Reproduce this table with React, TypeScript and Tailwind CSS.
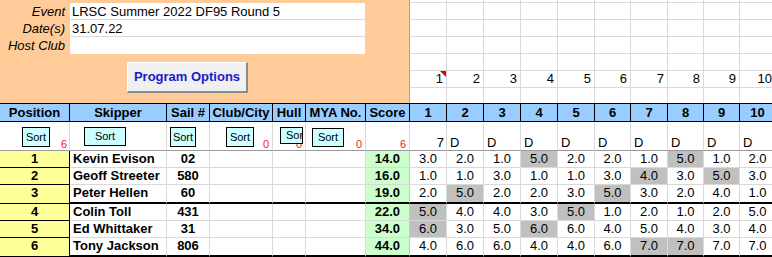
import React from "react";

const GRID =
  "grid grid-cols-[70px_97px_43px_63px_33px_60px_44px_37px_37px_37px_37px_37px_36px_37px_36px_36px_36px]";
const TOPGRID = "grid grid-cols-[37px_37px_37px_37px_37px_36px_37px_36px_36px_36px]";

type Row = {
  pos: number;
  name: string;
  sail: string;
  score: string;
  races: string[];
  gray: number[];
  thick?: boolean;
};

const rows: Row[] = [
  { pos: 1, name: "Kevin Evison", sail: "02", score: "14.0", races: ["3.0", "2.0", "1.0", "5.0", "2.0", "2.0", "1.0", "5.0", "1.0", "2.0"], gray: [3, 7] },
  { pos: 2, name: "Geoff Streeter", sail: "580", score: "16.0", races: ["1.0", "1.0", "3.0", "1.0", "1.0", "3.0", "4.0", "3.0", "5.0", "3.0"], gray: [6, 8] },
  { pos: 3, name: "Peter Hellen", sail: "60", score: "19.0", races: ["2.0", "5.0", "2.0", "2.0", "3.0", "5.0", "3.0", "2.0", "4.0", "1.0"], gray: [1, 5], thick: true },
  { pos: 4, name: "Colin Toll", sail: "431", score: "22.0", races: ["5.0", "4.0", "4.0", "3.0", "5.0", "1.0", "2.0", "1.0", "2.0", "5.0"], gray: [0, 4] },
  { pos: 5, name: "Ed Whittaker", sail: "31", score: "34.0", races: ["6.0", "3.0", "5.0", "6.0", "6.0", "4.0", "5.0", "4.0", "3.0", "4.0"], gray: [0, 3] },
  { pos: 6, name: "Tony Jackson", sail: "806", score: "44.0", races: ["4.0", "6.0", "6.0", "4.0", "4.0", "6.0", "7.0", "7.0", "7.0", "7.0"], gray: [6, 7], thick: true },
];

const headers = ["Position", "Skipper", "Sail #", "Club/City", "Hull", "MYA No.", "Score", "1", "2", "3", "4", "5", "6", "7", "8", "9", "10"];
const raceNums = ["1", "2", "3", "4", "5", "6", "7", "8", "9", "10"];

function SortBtn({ className, label = "Sort", start = false }: { className: string; label?: string; start?: boolean }) {
  return (
    <div
      className={`absolute z-10 flex items-center overflow-hidden whitespace-nowrap border border-black bg-[#CCFFFF] text-[11px] leading-none text-black ${
        start ? "justify-start pl-[5px]" : "justify-center"
      } ${className}`}
    >
      {label}
    </div>
  );
}

function RedNum({ v, right = "right-[3px]" }: { v: string; right?: string }) {
  return <span className={`absolute bottom-0 ${right} text-[11px] leading-[11px] text-[#f01818]`}>{v}</span>;
}

export default function App() {
  return (
    <div className="relative h-[257px] w-[772px] overflow-hidden bg-white font-['Liberation_Sans',Arial,sans-serif] text-[13px] text-black">
      {/* Top section */}
      <div className="flex h-[104px] border-b border-black">
        <div className="h-[103px] w-[410px] shrink-0 border-r border-[#b4a48c] bg-[#FFCC99] pt-[3px]">
          <div className="grid grid-cols-[70px_295px]">
            {[
              ["Event", "LRSC Summer 2022 DF95 Round 5"],
              ["Date(s)", "31.07.22"],
              ["Host Club", ""],
            ].map(([label, value], i) => (
              <React.Fragment key={label}>
                <div className="h-[17px] pr-[5px] pt-[1px] text-right italic leading-[16px]">{label}</div>
                <div
                  className={`h-[17px] bg-white pl-[2px] pt-[1px] leading-[16px] ${
                    i < 2 ? "border-b border-[#d9d9d9]" : ""
                  }`}
                >
                  {value}
                </div>
              </React.Fragment>
            ))}
          </div>
          <div className="ml-[127px] mt-[8px] flex h-[31px] w-[121px] items-center justify-center border border-b-2 border-r-2 border-t-white border-l-white border-b-[#8a8a8a] border-r-[#8a8a8a] bg-[#F0F0F0] text-[13px] font-bold text-[#1a1acc]">
            Program Options
          </div>
        </div>
        <div className="flex-1">
          {[3, 17, 17, 17, 17, 17, 15].map((h, ri) => (
            <div key={ri} className={TOPGRID}>
              {raceNums.map((n, ci) => (
                <div
                  key={ci}
                  className={`relative border-r border-[#d9d9d9] ${ri < 6 ? "border-b" : ""} ${
                    h === 3 ? "h-[3px]" : h === 17 ? "h-[17px]" : "h-[15px]"
                  } ${ri === 5 ? "pr-[3px] text-right leading-[16px]" : ""}`}
                >
                  {ri === 5 ? n : null}
                  {ri === 5 && ci === 0 ? (
                    <svg className="absolute right-0 top-0" width="6" height="6" viewBox="0 0 6 6">
                      <polygon points="0,0 6,0 6,6" fill="#e00000" />
                    </svg>
                  ) : null}
                </div>
              ))}
            </div>
          ))}
        </div>
      </div>

      {/* Header row */}
      <div className={GRID}>
        {headers.map((h) => (
          <div
            key={h}
            className="flex h-[18px] items-center justify-center overflow-hidden whitespace-nowrap border-b border-r border-black bg-[#99CCFF] font-bold leading-[17px]"
          >
            {h}
          </div>
        ))}
      </div>

      {/* Sort row */}
      <div className={GRID}>
        <div className="relative h-[29px] border-b border-r border-b-[#9a9a9a] border-r-[#d9d9d9]">
          <SortBtn className="left-[22px] top-[5px] h-[20px] w-[28px]" />
          <RedNum v="6" right="right-[2px]" />
        </div>
        <div className="relative h-[29px] border-b border-r border-b-[#9a9a9a] border-r-[#d9d9d9]">
          <SortBtn className="left-[14px] top-[5px] h-[19px] w-[42px]" />
        </div>
        <div className="relative h-[29px] border-b border-r border-b-[#9a9a9a] border-r-[#d9d9d9]">
          <SortBtn className="left-[3px] top-[5px] h-[20px] w-[26px]" />
        </div>
        <div className="relative h-[29px] border-b border-r border-b-[#9a9a9a] border-r-[#d9d9d9]">
          <SortBtn className="left-[16px] top-[5px] h-[20px] w-[28px]" />
          <RedNum v="0" />
        </div>
        <div className="relative h-[29px] border-b border-r border-b-[#9a9a9a] border-r-[#d9d9d9]">
          <RedNum v="0" />
          <SortBtn className="left-[7px] top-[5px] h-[17px] w-[23px]" label="Sort" start />
        </div>
        <div className="relative h-[29px] border-b border-r border-b-[#9a9a9a] border-r-[#d9d9d9]">
          <SortBtn className="left-[6px] top-[6px] h-[19px] w-[32px]" />
          <RedNum v="0" />
        </div>
        <div className="relative h-[29px] border-b border-r border-b-[#9a9a9a] border-r-[#d9d9d9]">
          <RedNum v="6" />
        </div>
        {raceNums.map((n, i) => (
          <div
            key={n}
            className={`flex h-[29px] items-end border-b border-r border-b-[#9a9a9a] border-r-[#d9d9d9] pb-[1px] leading-[13px] ${
              i === 0 ? "justify-end pr-[2px]" : "justify-start pl-[3px]"
            }`}
          >
            {i === 0 ? "7" : "D"}
          </div>
        ))}
      </div>

      {/* Data rows */}
      {rows.map((r) => {
        const h = r.thick ? "h-[19px]" : "h-[17px]";
        const bb = r.thick ? "border-b-2 border-b-black" : "border-b border-b-[#d9d9d9]";
        return (
          <div key={r.pos} className={GRID}>
            <div className={`${h} flex items-start justify-center border-b border-r border-black bg-[#FFFF99] font-bold leading-[16px]`}>
              {r.pos}
            </div>
            <div className={`${h} ${bb} overflow-hidden whitespace-nowrap border-r border-r-[#d9d9d9] pl-[3px] font-bold leading-[16px]`}>
              {r.name}
            </div>
            <div className={`${h} ${bb} border-r border-r-[#d9d9d9] text-center font-bold leading-[16px]`}>{r.sail}</div>
            <div className={`${h} ${bb} border-r border-r-[#d9d9d9]`} />
            <div className={`${h} ${bb} border-r border-r-[#d9d9d9]`} />
            <div className={`${h} ${bb} border-r border-r-[#d9d9d9]`} />
            <div className={`${h} ${bb} border-r border-r-[#c8c8c8] bg-[#CCFFCC] pr-[9px] text-right font-bold leading-[16px]`}>
              {r.score}
            </div>
            {r.races.map((v, i) => (
              <div
                key={i}
                className={`${h} ${bb} border-r border-r-[#d9d9d9] text-center leading-[16px] ${
                  r.gray.includes(i) ? "bg-[#C0C0C0]" : ""
                }`}
              >
                {v}
              </div>
            ))}
          </div>
        );
      })}

      {/* Partial row below */}
      <div className={GRID}>
        <div className="h-[20px] border-r border-black bg-[#FFFF99]" />
        {Array.from({ length: 16 }).map((_, i) => (
          <div key={i} className="h-[20px] border-r border-[#d9d9d9]" />
        ))}
      </div>
    </div>
  );
}
